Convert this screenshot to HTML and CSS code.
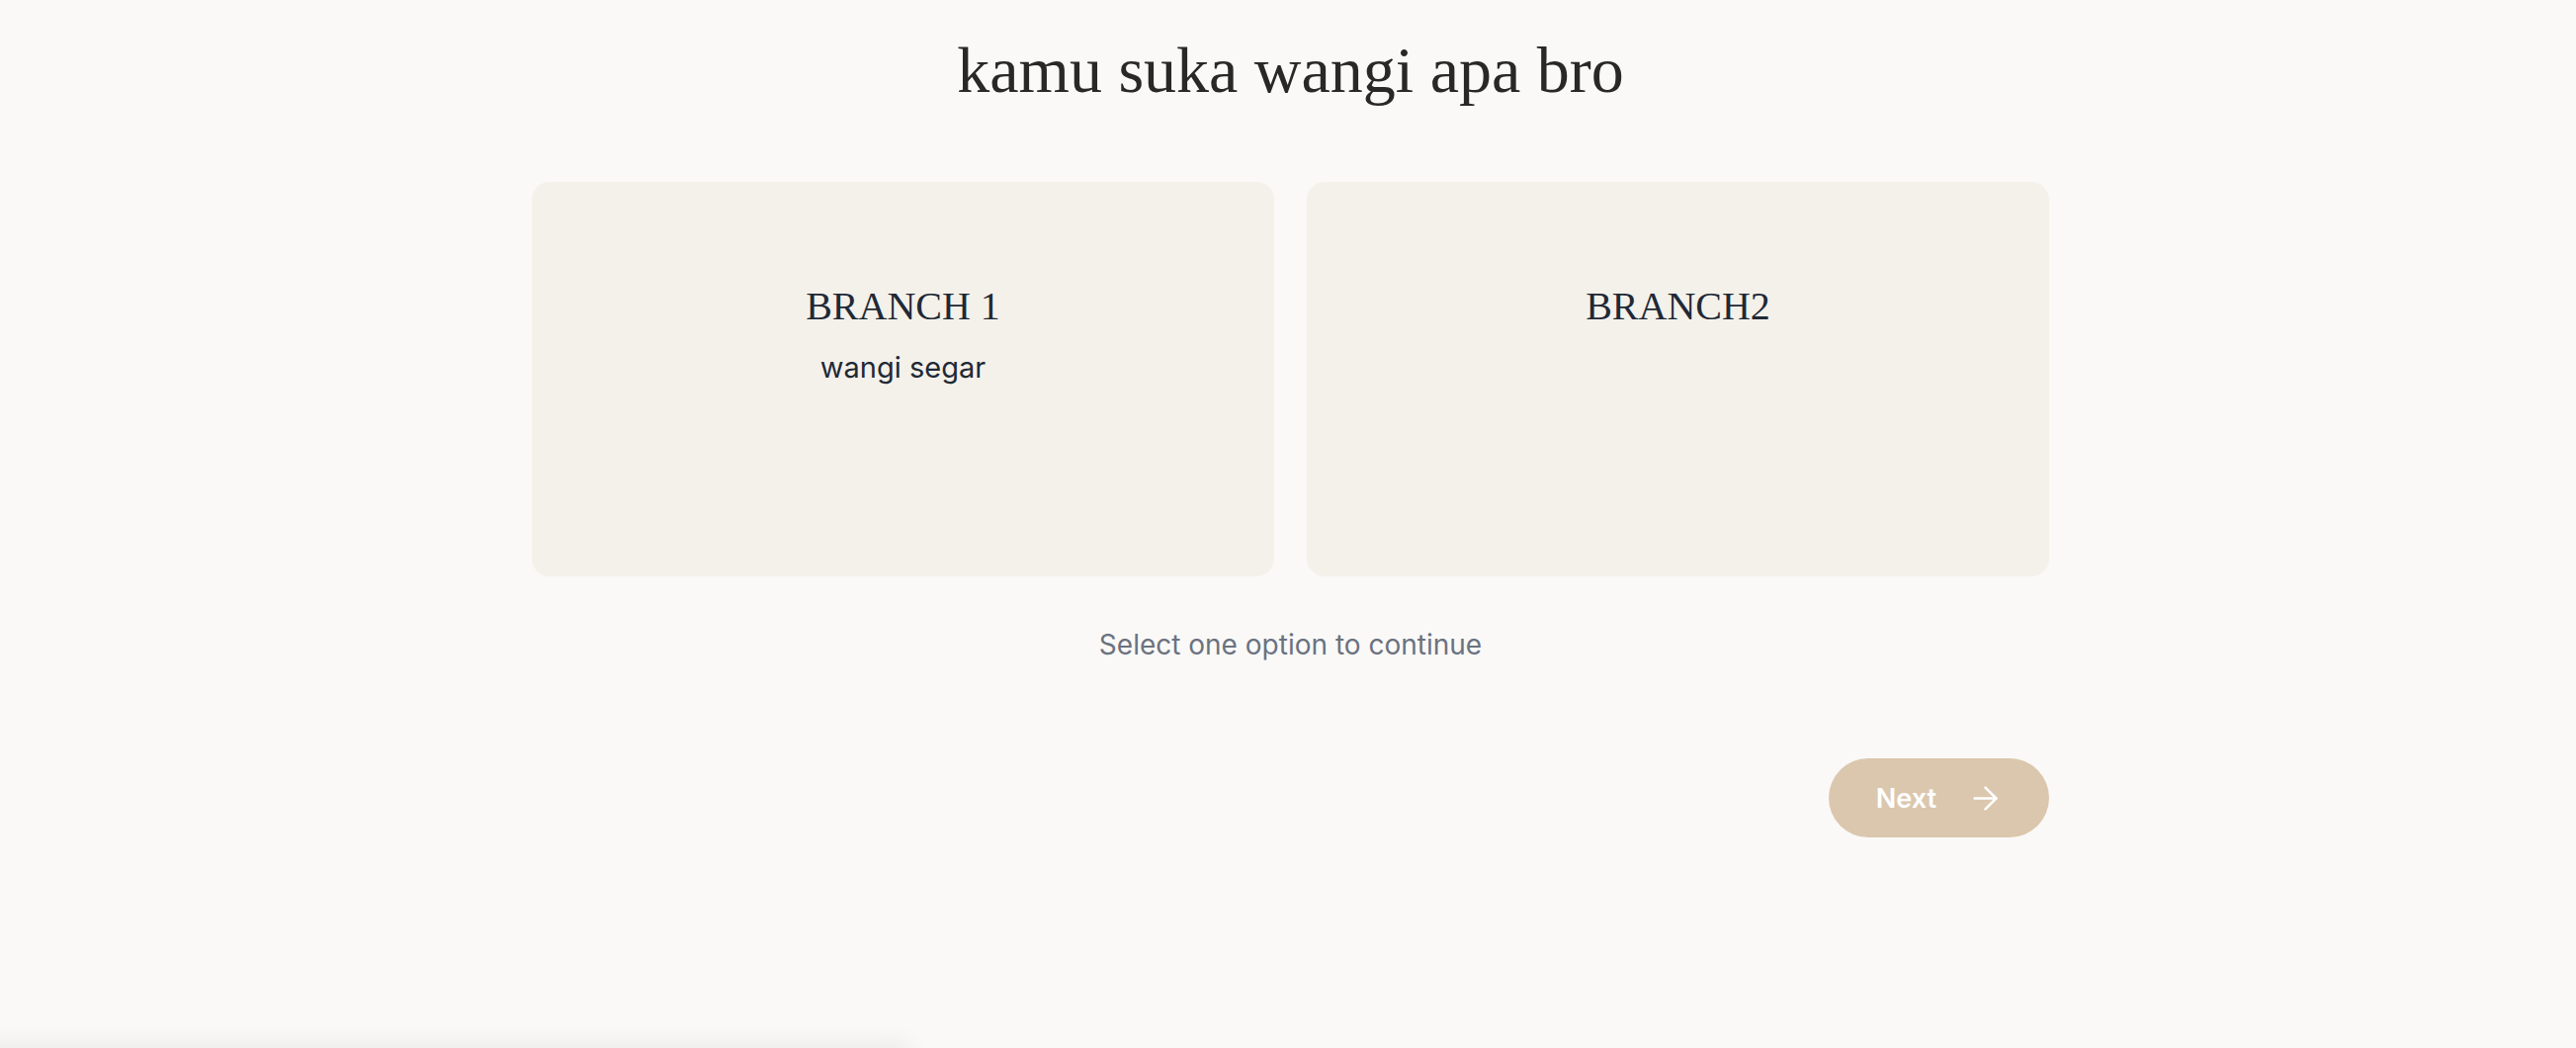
FILE: index.html
```html
<!DOCTYPE html>
<html lang="id">
<head>
<meta charset="utf-8">
<title>kamu suka wangi apa bro</title>
<link rel="stylesheet" href="styles.css">
</head>
<body>
<div class="page">
  <main class="quiz">
    <h1 class="question">kamu suka wangi apa bro</h1>
    <div class="options">
      <button class="option" type="button">
        <span class="option-title">BRANCH 1</span>
        <span class="option-desc">wangi segar</span>
      </button>
      <button class="option" type="button">
        <span class="option-title">BRANCH2</span>
      </button>
    </div>
    <p class="hint">Select one option to continue</p>
    <div class="actions">
      <button class="next" type="button">
        <span>Next</span>
        <svg class="next-icon" viewBox="4 4 16 16" width="25" height="25" fill="none" stroke="currentColor" stroke-width="1.6" stroke-linecap="round" stroke-linejoin="round"><path d="M5 12h14"/><path d="M12 5l7 7-7 7"/></svg>
      </button>
    </div>
  </main>
</div>
<div class="bottom-sheet"></div>
</body>
</html>
```

FILE: styles.css
```css
html, body {
  margin: 0;
  padding: 0;
  background: #faf9f7;
  height: 100%;
  overflow: hidden;
}

.page {
  padding-left: 5px;
  font-family: "Inter", "Liberation Sans", sans-serif;
}

.quiz {
  max-width: 1535px;
  margin: 0 auto;
  display: flex;
  flex-direction: column;
}

.question {
  margin: 31px 0 0;
  font-family: "Liberation Serif", serif;
  font-weight: 400;
  font-size: 66px;
  line-height: 79px;
  color: #2a2826;
  text-align: center;
}

.options {
  margin-top: 74px;
  display: grid;
  grid-template-columns: 1fr 1fr;
  gap: 33px;
}

.option {
  height: 399px;
  border: 0;
  border-radius: 18px;
  background: #f4f1ea;
  display: flex;
  flex-direction: column;
  align-items: center;
  justify-content: flex-start;
  padding: 102px 24px 0;
  cursor: pointer;
}

.option-title {
  font-family: "Liberation Serif", serif;
  font-size: 40px;
  line-height: 48px;
  color: #1f2937;
}

.option-desc {
  margin-top: 16px;
  font-family: "Inter", sans-serif;
  font-size: 29px;
  line-height: 44px;
  color: #1f2937;
}

.hint {
  margin: 49px 0 0;
  font-size: 28px;
  line-height: 40px;
  color: #6b7280;
  text-align: center;
}

.actions {
  margin-top: 95px;
  display: flex;
  justify-content: flex-end;
}

.next {
  height: 80px;
  padding: 0 52px 0 48px;
  border: 0;
  border-radius: 40px;
  background: #dbc7ad;
  color: #ffffff;
  font-family: "Inter", sans-serif;
  font-weight: 600;
  font-size: 27px;
  display: flex;
  align-items: center;
  gap: 37px;
  cursor: pointer;
}

.next-icon {
  display: block;
}

.bottom-sheet {
  position: fixed;
  left: -40px;
  bottom: -60px;
  width: 960px;
  height: 60px;
  background: #faf9f7;
  box-shadow: 0 -6px 24px rgba(0, 0, 0, 0.06);
}
```
